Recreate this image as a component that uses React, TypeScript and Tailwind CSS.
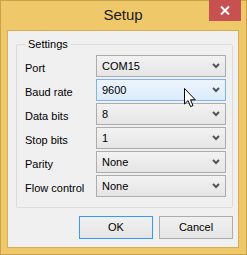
import React from 'react';

const font = { fontFamily: '"Liberation Sans", Arial, sans-serif' };

const rows = [
  { label: 'Port', value: 'COM15' },
  { label: 'Baud rate', value: '9600', hover: true },
  { label: 'Data bits', value: '8' },
  { label: 'Stop bits', value: '1' },
  { label: 'Parity', value: 'None' },
  { label: 'Flow control', value: 'None' },
];

const Chevron = () => (
  <svg width="8" height="6" viewBox="0 0 8 6" className="shrink-0">
    <polyline points="1,1 4,4 7,1" fill="none" stroke="#555" strokeWidth="2" />
  </svg>
);

const Cursor = () => (
  <svg width="13" height="20" viewBox="0 0 13 20" className="absolute left-[183px] top-[87px] pointer-events-none">
    <path
      d="M0.5 0.5 L0.5 16 L4 12.6 L6.6 18.6 L9 17.6 L6.5 11.8 L11.3 11.8 Z"
      fill="#fff"
      stroke="#000"
      strokeWidth="1"
      strokeLinejoin="miter"
    />
  </svg>
);

const Combo: React.FC<{ value: string; hover?: boolean }> = ({ value, hover }) => (
  <div
    className={
      hover
        ? 'w-[130px] h-[22px] flex items-center justify-between pl-[5px] pr-[5px] border border-[#7eb4ea] bg-gradient-to-b from-[#ecf4fc] to-[#dcecfc] text-[11px] text-black'
        : 'w-[130px] h-[22px] flex items-center justify-between pl-[5px] pr-[5px] border border-[#acacac] bg-gradient-to-b from-[#f2f2f2] to-[#e5e5e5] text-[11px] text-black'
    }
  >
    <span>{value}</span>
    <Chevron />
  </div>
);

export default function App() {
  return (
    <div
      className="relative w-[247px] h-[255px] bg-[#efc86a] border border-[#c9a24c] flex flex-col pl-[6px] pr-[7px] pb-[6px] select-none"
      style={font}
    >
      {/* Title bar */}
      <div className="h-[29px] flex items-center justify-center text-[15px] text-[#1a1a1a]">Setup</div>
      <div className="absolute top-[-1px] right-[5px] w-[32px] h-[21px] bg-[#c75050] flex items-center justify-center">
        <svg width="10" height="9" viewBox="0 0 10 9">
          <path d="M1 0.5 L9 8.5 M9 0.5 L1 8.5" stroke="#fff" strokeWidth="2" />
        </svg>
      </div>

      {/* Client area */}
      <div className="flex-1 border border-[#d4ae58] bg-[#f0f0f0] flex flex-col pl-[8px] pr-[5px] pt-[13px] pb-[8px]">
        <div className="relative border border-[#dcdcdc] rounded-[2px] pl-[8px] pr-[6px] pt-[10px] pb-[10px] flex flex-col gap-[2px]">
          <span className="absolute -top-[8px] left-[8px] px-[3px] bg-[#f0f0f0] text-[11px] leading-[14px] text-black">
            Settings
          </span>
          {rows.map(r => (
            <div key={r.label} className="flex items-start h-[22px]">
              <span className="w-[71px] pt-[6px] text-[11px] leading-[14px] text-black">{r.label}</span>
              <Combo value={r.value} hover={r.hover} />
            </div>
          ))}
        </div>

        <div className="mt-[8px] flex justify-end gap-[6px]">
          <button className="w-[74px] h-[23px] border border-[#3399ff] bg-gradient-to-b from-[#f0f0f0] to-[#e5e5e5] text-[11px] text-black">
            OK
          </button>
          <button className="w-[74px] h-[23px] border border-[#acacac] bg-gradient-to-b from-[#f0f0f0] to-[#e5e5e5] text-[11px] text-black">
            Cancel
          </button>
        </div>
      </div>

      <Cursor />
    </div>
  );
}
